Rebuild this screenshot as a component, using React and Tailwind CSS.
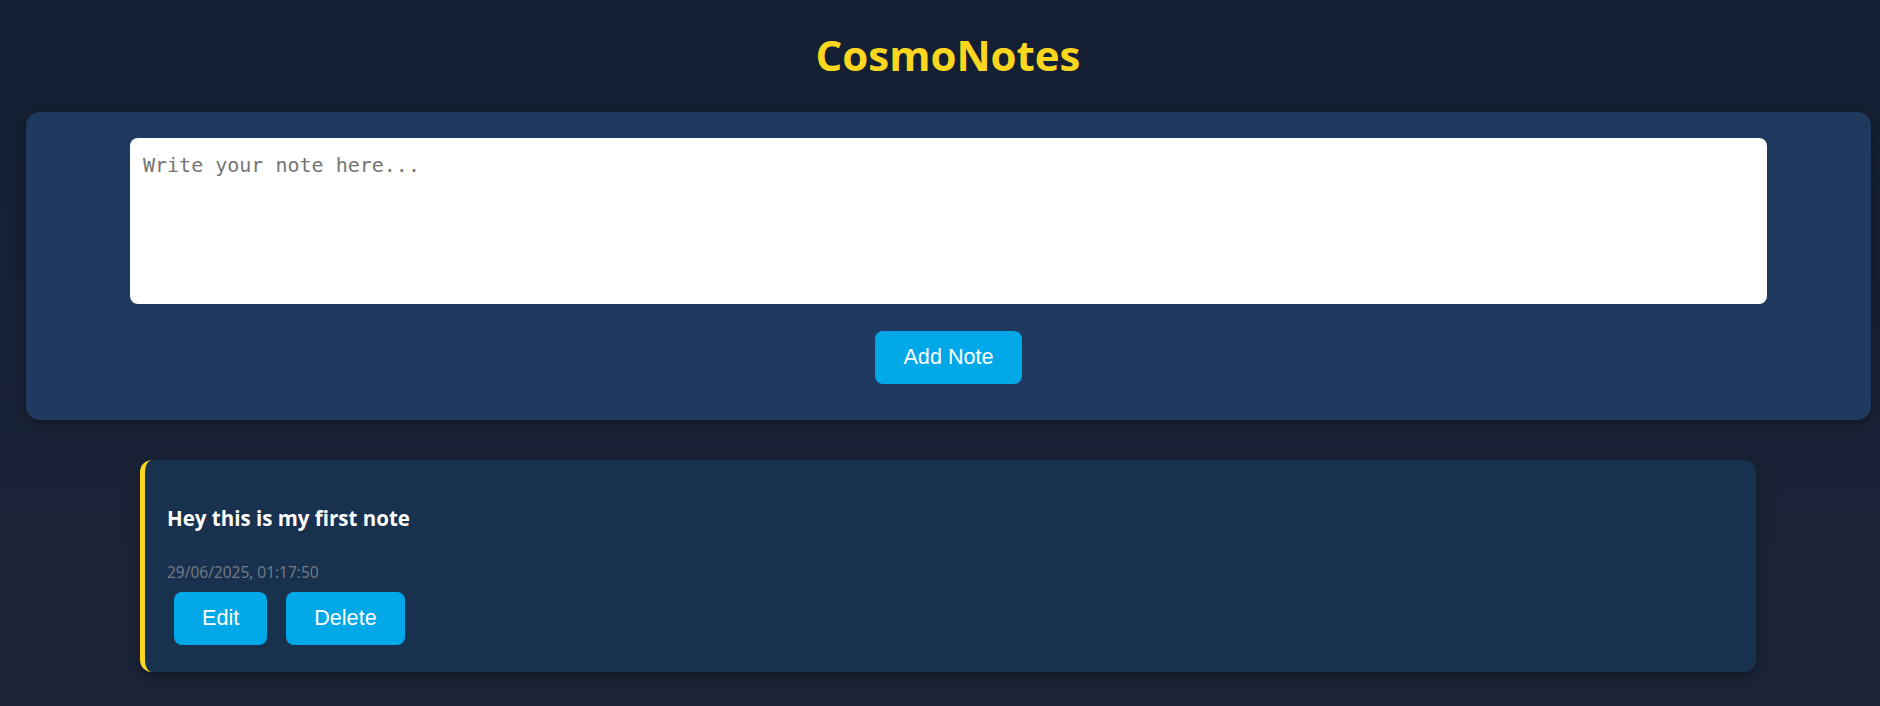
export default function App() {
  return (
    <div className="min-h-[706px] w-full bg-gradient-to-b from-[#141f33] to-[#1c2438] pt-[26px] pb-[34px]" style={{ fontFamily: '"Open Sans", "Noto Sans", sans-serif' }}>
      <h1 className="text-center text-[42px] font-bold leading-[57px] text-[#fad71e] pl-[16px]" style={{ fontFamily: '"Open Sans", sans-serif' }}>
        CosmoNotes
      </h1>
      <div className="mt-[29px] ml-[26px] w-[1845px] rounded-[14px] bg-[#1f3a5e] pt-[26px] pb-[36px] shadow-[0_4px_14px_rgba(0,0,0,0.35)]">
        <textarea
          className="block mx-auto w-[1637px] h-[166px] rounded-[8px] bg-white px-[13px] pt-[16px] text-[20px] leading-[23px] text-[#222] placeholder:text-[#757575] outline-none resize-none"
          style={{ fontFamily: '"DejaVu Sans Mono", monospace' }}
          placeholder="Write your note here..."
        />
        <div className="mt-[27px] flex justify-center">
          <button className="h-[53px] rounded-[8px] bg-[#00a8e8] px-[28px] text-[21.6px] text-white" style={{ fontFamily: '"Liberation Sans", Arial, sans-serif' }}>
            Add Note
          </button>
        </div>
      </div>
      <div className="mt-[40px] ml-[140px] w-[1616px] rounded-[12px] border-l-[5px] border-[#fad71e] bg-[#18314f] pl-[22px] pt-[44px] pb-[27px] shadow-[0_4px_14px_rgba(0,0,0,0.35)]">
        <div className="text-[20.5px] font-bold leading-[28px] text-white">Hey this is my first note</div>
        <div className="mt-[30px] text-[15.5px] leading-[21px] text-[#787d85]">29/06/2025, 01:17:50</div>
        <div className="mt-[9px] ml-[7px] flex gap-[19px]" style={{ fontFamily: '"Liberation Sans", Arial, sans-serif' }}>
          <button className="h-[53px] rounded-[8px] bg-[#00a8e8] px-[28px] text-[21.6px] text-white">Edit</button>
          <button className="h-[53px] rounded-[8px] bg-[#00a8e8] px-[28px] text-[21.6px] text-white">Delete</button>
        </div>
      </div>
    </div>
  );
}
